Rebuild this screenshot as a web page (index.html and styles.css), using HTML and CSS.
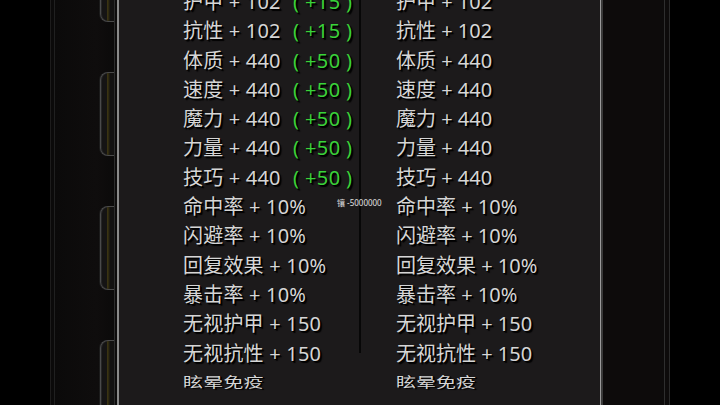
FILE: index.html
```html
<!DOCTYPE html>
<html lang="zh-CN">
<head>
<meta charset="utf-8">
<link rel="stylesheet" href="styles.css">
</head>
<body>
<div class="screen">
  <div class="gutter"></div>
  <div class="left-strip">
    <div class="edge-lines"></div>
    <div class="tabs">
      <div class="tab"></div>
      <div class="tab"></div>
      <div class="tab"></div>
      <div class="tab"></div>
    </div>
    <div class="rail"></div>
  </div>
  <div class="panel">
    <div class="col col-left">
      <div class="row"><span class="lbl">护甲 + 102</span><span class="bonus">( +15 )</span></div>
      <div class="row"><span class="lbl">抗性 + 102</span><span class="bonus">( +15 )</span></div>
      <div class="row"><span class="lbl">体质 + 440</span><span class="bonus">( +50 )</span></div>
      <div class="row"><span class="lbl">速度 + 440</span><span class="bonus">( +50 )</span></div>
      <div class="row"><span class="lbl">魔力 + 440</span><span class="bonus">( +50 )</span></div>
      <div class="row"><span class="lbl">力量 + 440</span><span class="bonus">( +50 )</span></div>
      <div class="row"><span class="lbl">技巧 + 440</span><span class="bonus">( +50 )</span></div>
      <div class="row"><span class="lbl">命中率 + 10%</span></div>
      <div class="row"><span class="lbl">闪避率 + 10%</span></div>
      <div class="row"><span class="lbl">回复效果 + 10%</span></div>
      <div class="row"><span class="lbl">暴击率 + 10%</span></div>
      <div class="row"><span class="lbl">无视护甲 + 150</span></div>
      <div class="row"><span class="lbl">无视抗性 + 150</span></div>
      <div class="row last"><span class="lbl">眩晕免疫</span></div>
    </div>
    <div class="divider"></div>
    <div class="col col-right">
      <div class="row">护甲 + 102</div>
      <div class="row">抗性 + 102</div>
      <div class="row">体质 + 440</div>
      <div class="row">速度 + 440</div>
      <div class="row">魔力 + 440</div>
      <div class="row">力量 + 440</div>
      <div class="row">技巧 + 440</div>
      <div class="row">命中率 + 10%</div>
      <div class="row">闪避率 + 10%</div>
      <div class="row">回复效果 + 10%</div>
      <div class="row">暴击率 + 10%</div>
      <div class="row">无视护甲 + 150</div>
      <div class="row">无视抗性 + 150</div>
      <div class="row last">眩晕免疫</div>
    </div>
    <div class="tip">镶 -5000000</div>
  </div>
  <div class="right-strip"></div>
  <div class="gutter-r"></div>
</div>
</body>
</html>
```

FILE: styles.css
```css
html, body {
  margin: 0;
  padding: 0;
  background: #000;
  width: 720px;
  height: 405px;
  overflow: hidden;
}

.screen {
  display: flex;
  width: 720px;
  height: 405px;
  font-family: "Noto Sans", "Noto Sans CJK SC", sans-serif;
}

.gutter {
  width: 50px;
  flex: none;
  background: #000;
}

.left-strip {
  width: 69px;
  flex: none;
  display: flex;
  background: #0b0a0a;
  overflow: hidden;
}

.edge-lines {
  width: 5px;
  flex: none;
  border-left: 1px solid #1d1c1c;
  border-right: 1px solid #202020;
  box-sizing: border-box;
}

.tabs {
  flex: 1;
  display: flex;
  flex-direction: column;
  align-items: flex-end;
  gap: 50px;
  margin-top: -62px;
  background: linear-gradient(90deg, #0b0a0a 0%, #0f0d0d 70%, #0b0a0a 100%);
}

.tab {
  width: 14px;
  height: 84px;
  flex: none;
  box-sizing: border-box;
  border: 1px solid #4a4a4a;
  border-right: none;
  border-radius: 8px 0 0 8px;
  background: linear-gradient(90deg, #151414 0%, #151414 45%, #3a3312 50%, #2a2610 60%, #121111 70%, #121111 100%);
  box-shadow: -1px 0 0 #1c1c1c, inset 1px 0 0 #262626;
}

.rail {
  width: 5px;
  flex: none;
  box-sizing: border-box;
  border-left: 1px solid #2c2c2c;
  border-right: 2px solid #8a8a8a;
  background: #0c0b0b;
}

.panel {
  position: relative;
  width: 481px;
  flex: none;
  background: #1c1a1b;
  overflow: hidden;
  display: grid;
  grid-template-columns: 240px 2px 1fr;
  align-items: start;
  color: #d6d6d6;
  font-size: 20px;
  text-shadow: 1px 1px 0 #000, 2px 2px 1px #000;
}

.col {
  margin-top: -13px;
  display: flex;
  flex-direction: column;
}

.col-left {
  padding-left: 64px;
}

.col-right {
  padding-left: 35px;
}

.row {
  height: 29.3px;
  line-height: 29.3px;
  white-space: nowrap;
  display: flex;
}

.lbl {
  width: 110px;
  flex: none;
  letter-spacing: 0.2px;
}

.bonus {
  color: #3ad23a;
  letter-spacing: 0.4px;
}

.row.last {
  transform: scaleY(0.66);
  transform-origin: 50% 40%;
}

.divider {
  height: 353px;
  background: #070707;
}

.tip {
  position: absolute;
  left: 218px;
  top: 197px;
  font-size: 8px;
  line-height: 12px;
  color: #e0e0e0;
  text-shadow: none;
  font-family: "Noto Sans", "Noto Sans CJK SC", sans-serif;
}

.right-strip {
  width: 70px;
  flex: none;
  box-sizing: border-box;
  background: #0d0b0b;
  border-left: 1px solid #9a9a9a;
  box-shadow: inset 2px 0 0 #3a3a3a, inset -4px 0 0 #0d0b0b, inset -5px 0 0 #2e2e2e;
  border-right: 1px solid #2a2a2a;
}

.gutter-r {
  flex: 1;
  background: #000;
}
```
